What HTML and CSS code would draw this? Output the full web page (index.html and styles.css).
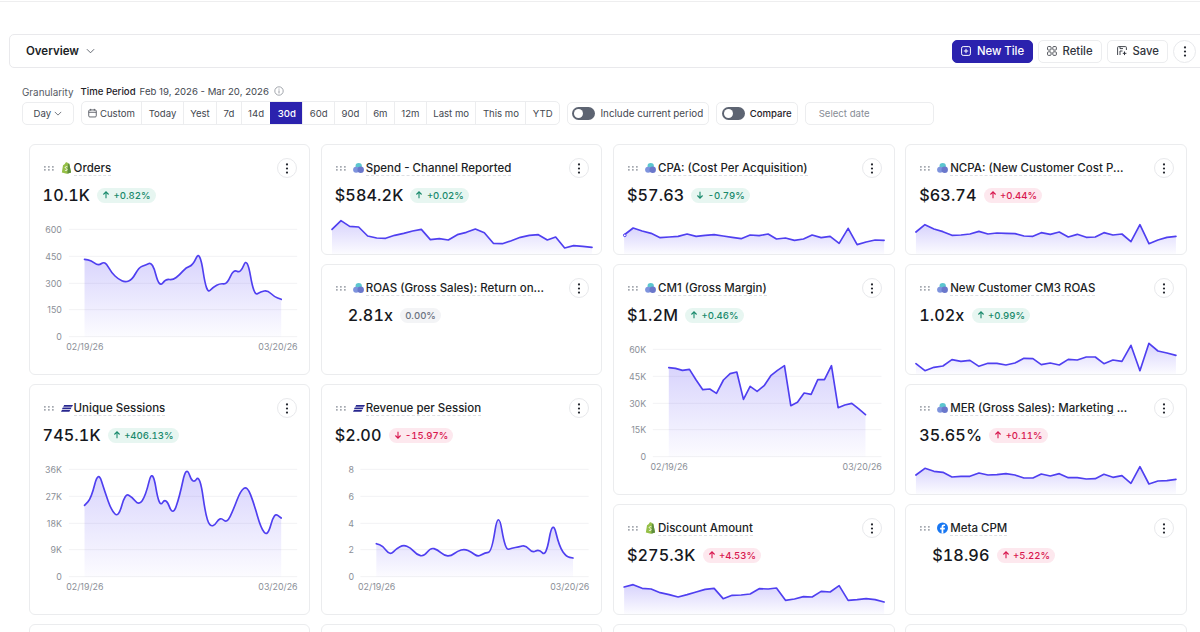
FILE: index.html
```html
<!DOCTYPE html>
<html lang="en">
<head>
<meta charset="utf-8">
<title>Overview</title>
<link rel="stylesheet" href="styles.css">
</head>
<body>
<svg class="sprite" aria-hidden="true">
  <defs>
    <linearGradient id="g" x1="0" y1="0" x2="0" y2="1">
      <stop offset="0" stop-color="#5b48f5" stop-opacity=".24"/>
      <stop offset="1" stop-color="#5b48f5" stop-opacity=".02"/>
    </linearGradient>
    <symbol id="drag" viewBox="0 0 10 5">
      <rect x="0" y="0" width="1.7" height="1.7"/><rect x="4" y="0" width="1.7" height="1.7"/><rect x="8" y="0" width="1.7" height="1.7"/>
      <rect x="0" y="3" width="1.7" height="1.7"/><rect x="4" y="3" width="1.7" height="1.7"/><rect x="8" y="3" width="1.7" height="1.7"/>
    </symbol>
    <symbol id="shopify" viewBox="0 0 12 13">
      <path d="M.9 11.3 2.2 3.4C3.2 3 3.9 2.6 4.3 1.8 4.8.6 5.6.1 6.4.3c.7.2 1.1.8 1.3 1.4l1.3.2 1.9 9.4-4.7 1.4z" fill="#95bf47"/>
      <path d="M7.7 1.7 9 1.9l2 9.6-4 1.2z" fill="#5e8e3e"/>
      <path d="M7 5.2C6 4.8 4.6 5 4.6 6c0 1 2 1.1 2 2.3 0 1.1-1.4 1.2-2.4.6" fill="none" stroke="#fff" stroke-width="1"/>
    </symbol>
    <symbol id="cloud" viewBox="0 0 11 11">
      <circle cx="5.7" cy="3.6" r="3.2" fill="#5cc6cf"/>
      <circle cx="3.1" cy="7.3" r="3" fill="#7e93dd"/>
      <circle cx="7.7" cy="7.3" r="3.2" fill="#6a77cb"/>
    </symbol>
    <symbol id="stripes" viewBox="0 0 12 7">
      <path d="M3.2 0H12l-1 1.7H2.2zM1.8 2.5h8.8l-.9 1.7H.9zM.9 5h8.3l-.8 1.7H0z" fill="#28278f"/>
    </symbol>
    <symbol id="fb" viewBox="0 0 12 12">
      <circle cx="6" cy="6" r="6" fill="#1877f2"/>
      <path d="M6.9 12V7.6h1.5l.3-1.8H6.9V4.7c0-.5.3-.9 1-.9h.9V2.2c-.4 0-.9-.1-1.3-.1-1.5 0-2.5.9-2.5 2.5v1.2H3.4v1.8H5V12z" fill="#fff"/>
    </symbol>
    <symbol id="up" viewBox="0 0 8 8"><path d="M4 7.2V1M1.4 3.5 4 .9l2.6 2.6" fill="none" stroke="currentColor" stroke-width="1.1"/></symbol>
    <symbol id="down" viewBox="0 0 8 8"><path d="M4 .8V7M1.4 4.5 4 7.1l2.6-2.6" fill="none" stroke="currentColor" stroke-width="1.1"/></symbol>
    <symbol id="dots" viewBox="0 0 4 12"><circle cx="2" cy="1.6" r="1.2"/><circle cx="2" cy="6" r="1.2"/><circle cx="2" cy="10.4" r="1.2"/></symbol>
    <symbol id="chev" viewBox="0 0 10 6"><path d="M1 1l4 4 4-4" fill="none" stroke="currentColor" stroke-width="1"/></symbol>
  </defs>
</svg>

<div class="top-rule"></div>

<header class="bar">
  <div class="bar-title"><span>Overview</span><svg class="chev-lg"><use href="#chev"/></svg></div>
  <div class="bar-actions">
    <button class="btn btn-primary"><svg class="btn-icon" viewBox="0 0 10 10"><rect x=".6" y=".6" width="8.8" height="8.8" rx="1.6" fill="none" stroke="currentColor"/><path d="M5 2.8v4.4M2.8 5h4.4" stroke="currentColor"/></svg>New Tile</button>
    <button class="btn"><svg class="btn-icon" viewBox="0 0 11 11"><g fill="none" stroke="currentColor" stroke-width=".9"><rect x=".6" y=".6" width="3.9" height="3.9" rx="1"/><rect x="6.4" y=".6" width="3.9" height="3.9" rx="1"/><rect x=".6" y="6.4" width="3.9" height="3.9" rx="1"/><rect x="6.4" y="6.4" width="3.9" height="3.9" rx="1"/></g></svg>Retile</button>
    <button class="btn btn-save"><svg class="btn-icon" viewBox="0 0 10 10"><g fill="none" stroke="currentColor" stroke-width=".9"><path d="M.6 9V1.5q0-.9.9-.9h7q.9 0 .9.9V4"/><path d="M3 9V5h2.5M3 .6v2h3"/><path d="M7.5 5.5v3.6M5.8 7.3h3.6" stroke-width="1"/></g></svg>Save</button>
    <button class="more more-lg"><svg><use href="#dots"/></svg></button>
  </div>
</header>

<section class="filters">
  <div class="field field-gran">
    <span class="label">Granularity</span>
    <div class="box day">Day<svg class="chev-sm"><use href="#chev"/></svg></div>
  </div>
  <div class="field">
    <span class="label"><b>Time Period</b><span>Feb 19, 2026 - Mar 20, 2026</span><svg class="info" viewBox="0 0 10 10"><circle cx="5" cy="5" r="4.2" fill="none" stroke="currentColor" stroke-width=".8"/><path d="M5 4.4v3M5 2.6v1" stroke="currentColor" stroke-width=".9"/></svg></span>
    <div class="seg">
      <span class="seg-item"><svg class="cal" viewBox="0 0 10 10"><g fill="none" stroke="currentColor" stroke-width=".9"><rect x=".8" y="1.6" width="8.4" height="7.8" rx="1.2"/><path d="M.8 4.2h8.4M3 .4v2M7 .4v2"/></g></svg>Custom</span>
      <span class="seg-item">Today</span>
      <span class="seg-item">Yest</span>
      <span class="seg-item">7d</span>
      <span class="seg-item">14d</span>
      <span class="seg-item is-active">30d</span>
      <span class="seg-item">60d</span>
      <span class="seg-item">90d</span>
      <span class="seg-item">6m</span>
      <span class="seg-item">12m</span>
      <span class="seg-item">Last mo</span>
      <span class="seg-item">This mo</span>
      <span class="seg-item">YTD</span>
    </div>
  </div>
  <div class="box toggle-box toggle-include"><span class="toggle"><span class="knob"></span></span>Include current period</div>
  <div class="box toggle-box toggle-strong"><span class="toggle"><span class="knob"></span></span>Compare</div>
  <div class="box date">Select date</div>
</section>

<main class="grid">

  <article class="card tall">
    <div class="head">
      <div class="title-row"><svg class="drag"><use href="#drag"/></svg><svg class="src"><use href="#shopify"/></svg><span class="title">Orders</span><button class="more"><svg><use href="#dots"/></svg></button></div>
      <div class="value-row"><span class="value">10.1K</span><span class="badge good"><svg><use href="#up"/></svg>+0.82%</span></div>
    </div>
    <svg class="chart" viewBox="28.8 219 838 483">
      <g class="grid-lines"><line x1="145" x2="830" y1="268" y2="268"/><line x1="145" x2="830" y1="349" y2="349"/><line x1="145" x2="830" y1="430" y2="430"/><line x1="145" x2="830" y1="509" y2="509"/><line x1="145" x2="830" y1="590" y2="590"/></g>
      <g class="axis-y"><text x="124" y="278">600</text><text x="124" y="359">450</text><text x="124" y="440">300</text><text x="124" y="519">150</text><text x="124" y="600">0</text></g>
      <path fill="url(#g)" d="M192,358 L202,359.5 Q212,361 222.5,369.5 Q233,378 243,370.5 Q253,363 263,380.5 Q273,398 283.5,408 Q294,418 304,422.5 Q314,427 324.5,423 Q335,419 345,400.5 Q355,382 365,378.5 Q375,375 385.5,370.5 Q396,366 406,404 Q416,442 426,429.5 Q436,417 446.5,418.5 Q457,420 467,412.5 Q477,405 487,393.5 Q497,382 507,379 Q517,376 527.5,353 Q538,330 548,396 Q558,462 568,451.5 Q578,441 588.5,435.5 Q599,430 609,431.5 Q619,433 629,410.5 Q639,388 649.5,394 Q660,400 670,375 Q680,350 690,408.5 Q700,467 710.5,461 Q721,455 731,453 Q741,451 751,460.5 Q761,470 771.5,474 L782,478 L782,590 L192,590 Z"/>
      <path class="line" d="M192,358 L202,359.5 Q212,361 222.5,369.5 Q233,378 243,370.5 Q253,363 263,380.5 Q273,398 283.5,408 Q294,418 304,422.5 Q314,427 324.5,423 Q335,419 345,400.5 Q355,382 365,378.5 Q375,375 385.5,370.5 Q396,366 406,404 Q416,442 426,429.5 Q436,417 446.5,418.5 Q457,420 467,412.5 Q477,405 487,393.5 Q497,382 507,379 Q517,376 527.5,353 Q538,330 548,396 Q558,462 568,451.5 Q578,441 588.5,435.5 Q599,430 609,431.5 Q619,433 629,410.5 Q639,388 649.5,394 Q660,400 670,375 Q680,350 690,408.5 Q700,467 710.5,461 Q721,455 731,453 Q741,451 751,460.5 Q761,470 771.5,474 L782,478"/>
      <text class="axis-x" x="193" y="629" text-anchor="middle">02/19/26</text><text class="axis-x" x="831" y="629" text-anchor="end">03/20/26</text>
    </svg>
  </article>

  <article class="card">
    <div class="head">
      <div class="title-row"><svg class="drag"><use href="#drag"/></svg><svg class="src"><use href="#cloud"/></svg><span class="title">Spend - Channel Reported</span><button class="more"><svg><use href="#dots"/></svg></button></div>
      <div class="value-row"><span class="value">$584.2K</span><span class="badge good"><svg><use href="#up"/></svg>+0.02%</span></div>
    </div>
    <svg class="spark" viewBox="5.4 219 838 123">
      <polygon fill="url(#g)" points="35,268 62,242 88,259 115,261 142,288 169,294 196,295 223,286 250,280 277,273 303,268 330,299 357,296 384,300 411,284 438,277 465,267 492,278 519,310 546,311 573,302 600,292 627,286 654,284 681,300 706,291 733,324 760,317 787,319 815,322 815,342 35,342"/>
      <polyline class="line" points="35,268 62,242 88,259 115,261 142,288 169,294 196,295 223,286 250,280 277,273 303,268 330,299 357,296 384,300 411,284 438,277 465,267 492,278 519,310 546,311 573,302 600,292 627,286 654,284 681,300 706,291 733,324 760,317 787,319 815,322"/>
    </svg>
  </article>

  <article class="card">
    <div class="head">
      <div class="title-row"><svg class="drag"><use href="#drag"/></svg><svg class="src"><use href="#cloud"/></svg><span class="title">CPA: (Cost Per Acquisition)</span><button class="more"><svg><use href="#dots"/></svg></button></div>
      <div class="value-row"><span class="value">$57.63</span><span class="badge good"><svg><use href="#down"/></svg>-0.79%</span></div>
    </div>
    <svg class="spark" viewBox="12 219 838 123">
      <polygon fill="url(#g)" points="42,285 69,264 96,273 123,280 150,293 177,291 204,289 231,282 258,289 285,286 312,284 339,288 366,292 393,296 420,285 447,287 474,282 499,297 526,294 553,301 580,297 606,285 633,293 660,289 687,310 714,265 741,314 768,306 795,300 822,301 822,342 42,342"/>
      <polyline class="line" points="42,285 69,264 96,273 123,280 150,293 177,291 204,289 231,282 258,289 285,286 312,284 339,288 366,292 393,296 420,285 447,287 474,282 499,297 526,294 553,301 580,297 606,285 633,293 660,289 687,310 714,265 741,314 768,306 795,300 822,301"/>
      <circle class="hover-dot" cx="44" cy="286" r="4"/>
    </svg>
  </article>

  <article class="card">
    <div class="head">
      <div class="title-row"><svg class="drag"><use href="#drag"/></svg><svg class="src"><use href="#cloud"/></svg><span class="title title-cut cut-short">NCPA: (New Customer Cost P...</span><button class="more"><svg><use href="#dots"/></svg></button></div>
      <div class="value-row"><span class="value">$63.74</span><span class="badge bad"><svg><use href="#up"/></svg>+0.44%</span></div>
    </div>
    <svg class="spark" viewBox="18.6 219 838 123">
      <polygon fill="url(#g)" points="48,276 75,254 102,267 129,275 156,286 183,285 210,282 237,274 264,282 291,279 318,280 345,281 372,288 399,289 424,278 451,283 478,276 505,291 532,283 559,292 586,291 612,278 639,285 666,282 693,305 720,254 747,311 774,300 801,292 828,289 828,342 48,342"/>
      <polyline class="line" points="48,276 75,254 102,267 129,275 156,286 183,285 210,282 237,274 264,282 291,279 318,280 345,281 372,288 399,289 424,278 451,283 478,276 505,291 532,283 559,292 586,291 612,278 639,285 666,282 693,305 720,254 747,311 774,300 801,292 828,289"/>
    </svg>
  </article>

  <article class="card">
    <div class="head">
      <div class="title-row"><svg class="drag"><use href="#drag"/></svg><svg class="src"><use href="#cloud"/></svg><span class="title title-cut">ROAS (Gross Sales): Return on...</span><button class="more"><svg><use href="#dots"/></svg></button></div>
      <div class="value-row indent"><span class="value">2.81x</span><span class="badge flat">0.00%</span></div>
    </div>
  </article>

  <article class="card tall">
    <div class="head">
      <div class="title-row"><svg class="drag"><use href="#drag"/></svg><svg class="src"><use href="#cloud"/></svg><span class="title">CM1 (Gross Margin)</span><button class="more"><svg><use href="#dots"/></svg></button></div>
      <div class="value-row"><span class="value">$1.2M</span><span class="badge good"><svg><use href="#up"/></svg>+0.46%</span></div>
    </div>
    <svg class="chart" viewBox="12 579 838 483">
      <g class="grid-lines"><line x1="128" x2="814" y1="628" y2="628"/><line x1="128" x2="814" y1="709" y2="709"/><line x1="128" x2="814" y1="790" y2="790"/><line x1="128" x2="814" y1="869" y2="869"/><line x1="128" x2="814" y1="950" y2="950"/></g>
      <g class="axis-y"><text x="108" y="638">60K</text><text x="108" y="719">45K</text><text x="108" y="800">30K</text><text x="108" y="879">15K</text><text x="108" y="960">0</text></g>
      <polygon fill="url(#g)" points="176,683 196,685 217,691 238,688 258,720 278,749 299,747 319,760 340,720 360,701 380,696 400,778 420,739 441,754 462,737 482,707 502,691 523,677 542,797 562,787 582,759 603,763 623,719 643,719 664,677 684,803 704,795 725,790 745,806 766,824 766,950 176,950"/>
      <polyline class="line" points="176,683 196,685 217,691 238,688 258,720 278,749 299,747 319,760 340,720 360,701 380,696 400,778 420,739 441,754 462,737 482,707 502,691 523,677 542,797 562,787 582,759 603,763 623,719 643,719 664,677 684,803 704,795 725,790 745,806 766,824"/>
      <text class="axis-x" x="177" y="989" text-anchor="middle">02/19/26</text><text class="axis-x" x="815" y="989" text-anchor="end">03/20/26</text>
    </svg>
  </article>

  <article class="card">
    <div class="head">
      <div class="title-row"><svg class="drag"><use href="#drag"/></svg><svg class="src"><use href="#cloud"/></svg><span class="title">New Customer CM3 ROAS</span><button class="more"><svg><use href="#dots"/></svg></button></div>
      <div class="value-row"><span class="value">1.02x</span><span class="badge good"><svg><use href="#up"/></svg>+0.99%</span></div>
    </div>
    <svg class="spark" viewBox="18.6 579 838 123">
      <polygon fill="url(#g)" points="48,671 75,692 102,682 129,678 156,659 183,664 210,661 237,679 264,670 291,670 318,675 345,669 372,655 399,656 424,674 451,669 478,675 505,658 532,660 559,651 586,651 612,671 639,660 666,664 693,616 720,692 747,610 774,633 801,639 828,646 828,702 48,702"/>
      <polyline class="line" points="48,671 75,692 102,682 129,678 156,659 183,664 210,661 237,679 264,670 291,670 318,675 345,669 372,655 399,656 424,674 451,669 478,675 505,658 532,660 559,651 586,651 612,671 639,660 666,664 693,616 720,692 747,610 774,633 801,639 828,646"/>
    </svg>
  </article>

  <article class="card tall">
    <div class="head">
      <div class="title-row"><svg class="drag"><use href="#drag"/></svg><svg class="src src-stripes"><use href="#stripes"/></svg><span class="title">Unique Sessions</span><button class="more"><svg><use href="#dots"/></svg></button></div>
      <div class="value-row"><span class="value">745.1K</span><span class="badge good"><svg><use href="#up"/></svg>+406.13%</span></div>
    </div>
    <svg class="chart" viewBox="28.8 219 838 483">
      <g class="grid-lines"><line x1="145" x2="830" y1="268" y2="268"/><line x1="145" x2="830" y1="349" y2="349"/><line x1="145" x2="830" y1="430" y2="430"/><line x1="145" x2="830" y1="509" y2="509"/><line x1="145" x2="830" y1="590" y2="590"/></g>
      <g class="axis-y"><text x="124" y="278">36K</text><text x="124" y="359">27K</text><text x="124" y="440">18K</text><text x="124" y="519">9K</text><text x="124" y="600">0</text></g>
      <path fill="url(#g)" d="M192,376 L202,365.5 Q212,355 222.5,313.5 Q233,272 243,303.5 Q253,335 263,363.5 Q273,392 283.5,402 Q294,412 304,376 Q314,340 324.5,345.5 Q335,351 345,363.5 Q355,376 365,362 Q375,348 385.5,305 Q396,262 406,323 Q416,384 426,368 Q436,352 446.5,380 Q457,408 467,379 Q477,350 487,303 Q497,256 507,285 Q517,314 527.5,298 Q538,282 548,353.5 Q558,425 568,434 Q578,443 588.5,426.5 Q599,410 609,420 Q619,430 629,409 Q639,388 649.5,360 Q660,332 670,325 Q680,318 690,344 Q700,370 710.5,407 Q721,444 731,457 Q741,470 751,434 Q761,398 771.5,406 L782,414 L782,590 L192,590 Z"/>
      <path class="line" d="M192,376 L202,365.5 Q212,355 222.5,313.5 Q233,272 243,303.5 Q253,335 263,363.5 Q273,392 283.5,402 Q294,412 304,376 Q314,340 324.5,345.5 Q335,351 345,363.5 Q355,376 365,362 Q375,348 385.5,305 Q396,262 406,323 Q416,384 426,368 Q436,352 446.5,380 Q457,408 467,379 Q477,350 487,303 Q497,256 507,285 Q517,314 527.5,298 Q538,282 548,353.5 Q558,425 568,434 Q578,443 588.5,426.5 Q599,410 609,420 Q619,430 629,409 Q639,388 649.5,360 Q660,332 670,325 Q680,318 690,344 Q700,370 710.5,407 Q721,444 731,457 Q741,470 751,434 Q761,398 771.5,406 L782,414"/>
      <text class="axis-x" x="193" y="629" text-anchor="middle">02/19/26</text><text class="axis-x" x="831" y="629" text-anchor="end">03/20/26</text>
    </svg>
  </article>

  <article class="card tall">
    <div class="head">
      <div class="title-row"><svg class="drag"><use href="#drag"/></svg><svg class="src src-stripes"><use href="#stripes"/></svg><span class="title">Revenue per Session</span><button class="more"><svg><use href="#dots"/></svg></button></div>
      <div class="value-row"><span class="value">$2.00</span><span class="badge bad"><svg><use href="#down"/></svg>-15.97%</span></div>
    </div>
    <svg class="chart" viewBox="5.4 219 838 483">
      <g class="grid-lines"><line x1="120" x2="805" y1="268" y2="268"/><line x1="120" x2="805" y1="349" y2="349"/><line x1="120" x2="805" y1="430" y2="430"/><line x1="120" x2="805" y1="509" y2="509"/><line x1="120" x2="805" y1="590" y2="590"/></g>
      <g class="axis-y"><text x="101" y="278">8</text><text x="101" y="359">6</text><text x="101" y="440">4</text><text x="101" y="519">2</text><text x="101" y="600">0</text></g>
      <path fill="url(#g)" d="M168,491 L178,494.5 Q188,498 198.5,512 Q209,526 219,515.5 Q229,505 239,500 Q249,495 259.5,498.5 Q270,502 280,513.5 Q290,525 300.5,527 Q311,529 321,516 Q331,503 341,506 Q351,509 361.5,518 Q372,527 382,527.5 Q392,528 402,520.5 Q412,513 422.5,510 Q433,507 443,511.5 Q453,516 463,523.5 Q473,531 483.5,524.5 Q494,518 504,517 Q514,516 524,452 Q534,388 544.5,449.5 Q555,511 565,507.5 Q575,504 585,502.5 Q595,501 605.5,498 Q616,495 626,507 Q636,519 646,513 Q656,507 666.5,518.5 Q677,530 687,474 Q697,418 707,459 Q717,500 727.5,515 Q738,530 748,532 L758,534 L758,590 L168,590 Z"/>
      <path class="line" d="M168,491 L178,494.5 Q188,498 198.5,512 Q209,526 219,515.5 Q229,505 239,500 Q249,495 259.5,498.5 Q270,502 280,513.5 Q290,525 300.5,527 Q311,529 321,516 Q331,503 341,506 Q351,509 361.5,518 Q372,527 382,527.5 Q392,528 402,520.5 Q412,513 422.5,510 Q433,507 443,511.5 Q453,516 463,523.5 Q473,531 483.5,524.5 Q494,518 504,517 Q514,516 524,452 Q534,388 544.5,449.5 Q555,511 565,507.5 Q575,504 585,502.5 Q595,501 605.5,498 Q616,495 626,507 Q636,519 646,513 Q656,507 666.5,518.5 Q677,530 687,474 Q697,418 707,459 Q717,500 727.5,515 Q738,530 748,532 L758,534"/>
      <text class="axis-x" x="169" y="629" text-anchor="middle">02/19/26</text><text class="axis-x" x="807" y="629" text-anchor="end">03/20/26</text>
    </svg>
  </article>

  <article class="card">
    <div class="head">
      <div class="title-row"><svg class="drag"><use href="#drag"/></svg><svg class="src"><use href="#cloud"/></svg><span class="title title-cut">MER (Gross Sales): Marketing ...</span><button class="more"><svg><use href="#dots"/></svg></button></div>
      <div class="value-row"><span class="value">35.65%</span><span class="badge bad"><svg><use href="#up"/></svg>+0.11%</span></div>
    </div>
    <svg class="spark" viewBox="18.6 219 838 123">
      <polygon fill="url(#g)" points="48,285 75,265 102,274 129,277 156,291 183,289 210,289 237,279 264,285 291,284 318,281 345,285 372,294 399,294 424,282 451,288 478,281 505,293 532,293 559,297 586,296 612,283 639,292 666,287 693,310 720,260 747,312 774,303 801,302 828,298 828,342 48,342"/>
      <polyline class="line" points="48,285 75,265 102,274 129,277 156,291 183,289 210,289 237,279 264,285 291,284 318,281 345,285 372,294 399,294 424,282 451,288 478,281 505,293 532,293 559,297 586,296 612,283 639,292 666,287 693,310 720,260 747,312 774,303 801,302 828,298"/>
    </svg>
  </article>

  <article class="card">
    <div class="head">
      <div class="title-row"><svg class="drag"><use href="#drag"/></svg><svg class="src"><use href="#shopify"/></svg><span class="title">Discount Amount</span><button class="more"><svg><use href="#dots"/></svg></button></div>
      <div class="value-row"><span class="value">$275.3K</span><span class="badge bad"><svg><use href="#up"/></svg>+4.53%</span></div>
    </div>
    <svg class="spark" viewBox="12 579 838 123">
      <polygon fill="url(#g)" points="42,621 69,614 96,625 123,627 150,638 177,644 204,651 231,644 258,636 285,628 312,625 339,656 366,646 393,645 420,642 447,626 474,627 499,624 526,661 553,657 580,650 606,651 633,634 660,636 687,617 714,661 741,659 768,656 795,659 822,666 822,702 42,702"/>
      <polyline class="line" points="42,621 69,614 96,625 123,627 150,638 177,644 204,651 231,644 258,636 285,628 312,625 339,656 366,646 393,645 420,642 447,626 474,627 499,624 526,661 553,657 580,650 606,651 633,634 660,636 687,617 714,661 741,659 768,656 795,659 822,666"/>
    </svg>
  </article>

  <article class="card">
    <div class="head">
      <div class="title-row"><svg class="drag"><use href="#drag"/></svg><svg class="src"><use href="#fb"/></svg><span class="title">Meta CPM</span><button class="more"><svg><use href="#dots"/></svg></button></div>
      <div class="value-row indent"><span class="value">$18.96</span><span class="badge bad"><svg><use href="#up"/></svg>+5.22%</span></div>
    </div>
  </article>

  <article class="card"></article>
  <article class="card"></article>
  <article class="card"></article>
  <article class="card"></article>
</main>
</body>
</html>
```

FILE: styles.css
```css
* { box-sizing: border-box; }
html, body { height: 632px; overflow: hidden; }
body {
  margin: 0;
  background: #fff;
  color: #1b1e25;
  font-family: Inter, "Liberation Sans", sans-serif;
}
button { font: inherit; color: inherit; background: #fff; cursor: pointer; }
.sprite { position: absolute; width: 0; height: 0; }

.top-rule { height: 1px; margin-top: 1px; background: #eeeeef; }

.bar {
  display: flex;
  align-items: center;
  justify-content: space-between;
  height: 34px;
  margin: 32px -5px 0 9px;
  padding: 0 8px 0 16px;
  border: 1px solid #e9e9ec;
  border-radius: 5px;
}
.bar-title { display: flex; align-items: center; gap: 7px; font-size: 11.5px; font-weight: 600; }
.chev-lg { width: 9px; height: 6px; color: #555a64; }
.bar-actions { display: flex; align-items: center; gap: 5px; }
.btn {
  display: flex;
  align-items: center;
  gap: 6px;
  height: 23px;
  padding: 0 8px;
  border: 1px solid #ecedef;
  border-radius: 5px;
  font-size: 11.3px;
  font-weight: 500;
  color: #30343c;
}
.btn-primary { padding: 0 7.5px; background: #2b22ae; border-color: #2b22ae; color: #fff; }
.btn-save { padding: 0 8px 0 9px; }
.btn-icon { width: 10px; height: 10px; flex: none; }

.more {
  display: flex;
  align-items: center;
  justify-content: center;
  flex: none;
  width: 20px;
  height: 20px;
  margin-left: auto;
  padding: 0;
  border: 1px solid #e8e9ec;
  border-radius: 50%;
}
.more svg { width: 4px; height: 11px; fill: #25282f; }
.more-lg { width: 23px; height: 23px; }

.filters {
  display: flex;
  align-items: flex-end;
  gap: 7px;
  margin-top: 16px;
  padding-left: 22px;
  font-size: 9.6px;
  color: #43474f;
}
.field { display: flex; flex-direction: column; gap: 3px; }
.label { display: flex; align-items: center; gap: 4px; height: 14px; white-space: nowrap; }
.label b { font-weight: 500; color: #1f2228; }
.field-gran .label { font-size: 9.9px; color: #555a63; }
.info { width: 10px; height: 10px; color: #8c9098; margin-left: 1px; }
.box {
  display: flex;
  align-items: center;
  height: 23px;
  border: 1px solid #ecedef;
  border-radius: 5px;
}
.day { justify-content: center; gap: 3px; width: 51.5px; }
.chev-sm { width: 8px; height: 5px; color: #555a64; }
.seg {
  display: flex;
  height: 24px;
  border: 1px solid #ecedef;
  border-radius: 5px;
  overflow: hidden;
}
.seg-item {
  display: flex;
  align-items: center;
  gap: 3px;
  padding: 0 6.4px;
  border-left: 1px solid #ecedef;
  white-space: nowrap;
}
.seg-item:first-child { border-left: 0; }
.seg-item.is-active { background: #2b22ae; border-left-color: #2b22ae; color: #fff; font-weight: 500; }
.cal { width: 9px; height: 10px; }

.toggle-box { gap: 5px; padding: 0 5px; }
.toggle-include { font-size: 9.8px; padding: 0 4.5px; }
.toggle-strong { font-weight: 500; color: #1f2228; }
.toggle {
  display: flex;
  align-items: center;
  width: 23px;
  height: 13px;
  padding: 0 2px;
  border-radius: 7px;
  background: #5d6472;
}
.knob { width: 9px; height: 9px; border-radius: 50%; background: #fff; }
.date { width: 129px; padding-left: 13px; color: #878c95; }

.grid {
  display: grid;
  grid-template-columns: repeat(4, 281.6px);
  grid-auto-rows: 111px;
  column-gap: 10.6px;
  row-gap: 9px;
  margin: 19px 0 0 28.6px;
}
.card {
  display: flex;
  flex-direction: column;
  border: 1px solid #ebecee;
  border-radius: 6px;
  background: #fff;
  overflow: hidden;
}
.tall { grid-row: span 2; }
.head { flex: none; height: 68px; padding: 13px 12px 0 13px; }
.title-row { display: flex; align-items: center; height: 20px; }
.drag { width: 10px; height: 5px; margin-left: 1px; fill: #a4a8af; flex: none; }
.src { width: 11px; height: 12px; margin: 0 2px 0 7px; flex: none; }
.src-stripes { height: 7px; width: 12px; margin: 0 1px 0 7px; }
.title {
  font-size: 11.5px;
  font-weight: 500;
  line-height: 14px;
  border-bottom: 1px dashed #dddfe3;
  white-space: nowrap;
}
.title-cut { width: 165px; }
.cut-short { width: 161px; }
.value-row { display: flex; align-items: center; gap: 7px; height: 20px; margin-top: 7px; }
.indent { padding-left: 13px; }
.value { font-size: 16.2px; font-weight: 500; letter-spacing: .1px; font-variant-numeric: tabular-nums; color: #16181d; }
.badge {
  display: flex;
  align-items: center;
  gap: 3.5px;
  height: 15px;
  padding: 0 5px;
  border-radius: 8px;
  font-size: 9.6px;
  font-weight: 500;
  font-variant-numeric: tabular-nums;
}
.badge svg { width: 8px; height: 8px; }
.good { background: #e7f6f1; color: #1a8a6c; }
.bad { background: #fde8ee; color: #d8174f; }
.flat { background: #f3f4f6; color: #6b7280; }

.chart { display: block; width: 100%; height: 161px; flex: none; }
.spark { display: block; width: 100%; height: 41px; flex: none; margin-top: auto; }
.line {
  fill: none;
  stroke: #4f3ff0;
  stroke-width: 5;
  stroke-linejoin: round;
  stroke-linecap: round;
}
.hover-dot { fill: #fff; stroke: #4f3ff0; stroke-width: 3; }
.grid-lines line { stroke: #f2f2f4; stroke-width: 3; }
.axis-y text { text-anchor: end; }
.axis-y text, .axis-x { font-size: 26.5px; fill: #8b8f97; }
```
